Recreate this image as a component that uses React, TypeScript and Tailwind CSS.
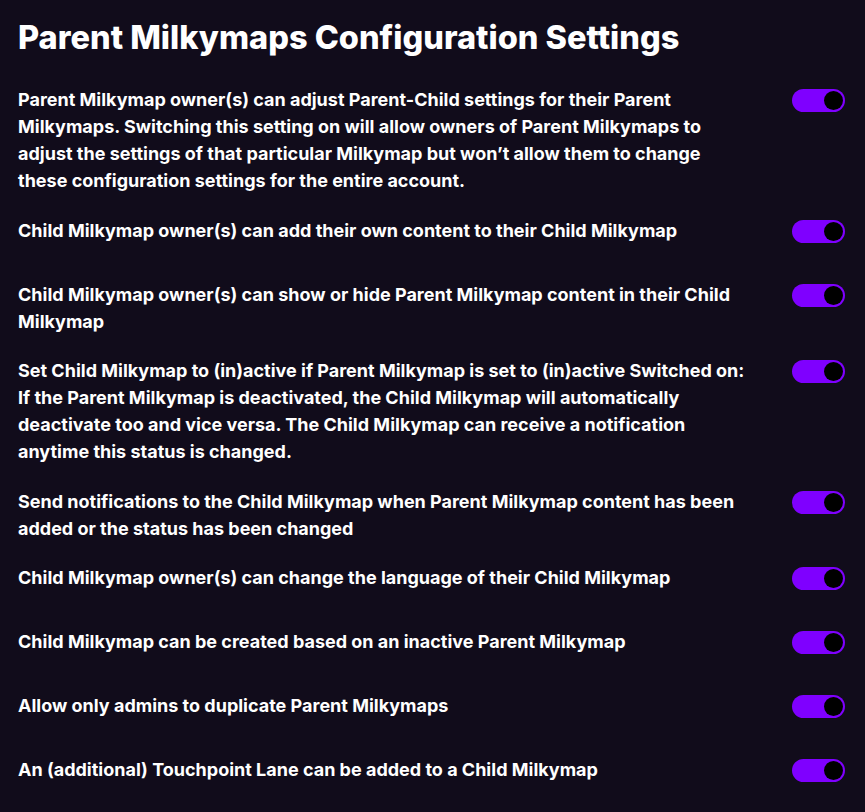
import { useState } from "react";

const settings = [
  "Parent Milkymap owner(s) can adjust Parent-Child settings for their Parent Milkymaps. Switching this setting on will allow owners of Parent Milkymaps to adjust the settings of that particular Milkymap but won’t allow them to change these configuration settings for the entire account.",
  "Child Milkymap owner(s) can add their own content to their Child Milkymap",
  "Child Milkymap owner(s) can show or hide Parent Milkymap content in their Child Milkymap",
  "Set Child Milkymap to (in)active if Parent Milkymap is set to (in)active Switched on: If the Parent Milkymap is deactivated, the Child Milkymap will automatically deactivate too and vice versa. The Child Milkymap can receive a notification anytime this status is changed.",
  "Send notifications to the Child Milkymap when Parent Milkymap content has been added or the status has been changed",
  "Child Milkymap owner(s) can change the language of their Child Milkymap",
  "Child Milkymap can be created based on an inactive Parent Milkymap",
  "Allow only admins to duplicate Parent Milkymaps",
  "An (additional) Touchpoint Lane can be added to a Child Milkymap",
];

const Toggle = ({ on, onClick }: { on: boolean; onClick: () => void }) => (
  <button
    onClick={onClick}
    className={`mt-[3px] flex h-[23px] w-[53px] shrink-0 items-center rounded-full p-[2px] ${
      on ? "justify-end bg-[#7f00ff]" : "justify-start bg-[#3a3346]"
    }`}
  >
    <span className="h-[19px] w-[19px] rounded-full bg-black" />
  </button>
);

export default function App() {
  const [values, setValues] = useState(settings.map(() => true));

  return (
    <div
      className="min-h-screen bg-[#110c1b] px-[18px] pt-[18px] pb-10 text-white"
      style={{ fontFamily: "Inter, 'Noto Sans', sans-serif" }}
    >
      <h1 className="text-[32.5px] font-extrabold leading-[40px]">Parent Milkymaps Configuration Settings</h1>
      <div className="mt-[28px] flex flex-col gap-[22.5px]">
        {settings.map((text, i) => (
          <div key={i} className="flex min-h-[41.5px] items-start justify-between gap-8 pr-[2px]">
            <p className="max-w-[735px] text-[18px] font-bold leading-[27px]">{text}</p>
            <Toggle
              on={values[i]}
              onClick={() => setValues((v) => v.map((x, j) => (j === i ? !x : x)))}
            />
          </div>
        ))}
      </div>
    </div>
  );
}
